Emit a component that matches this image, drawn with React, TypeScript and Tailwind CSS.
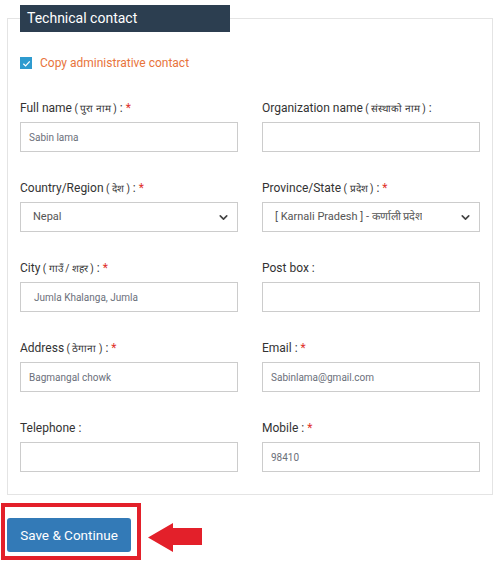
import { ChevronDown } from 'lucide-react'

type Field = {
  label: string
  local?: string
  required?: boolean
  value?: string
  select?: boolean
  valueClass?: string
}

const rows: [Field, Field][] = [
  [
    { label: 'Full name', local: 'पुरा नाम', required: true, value: 'Sabin lama' },
    { label: 'Organization name', local: 'संस्थाको नाम' },
  ],
  [
    { label: 'Country/Region', local: 'देश', required: true, value: 'Nepal', select: true },
    {
      label: 'Province/State',
      local: 'प्रदेश',
      required: true,
      value: '[ Karnali Pradesh ] - कर्णाली प्रदेश',
      select: true,
    },
  ],
  [
    { label: 'City', local: 'गाउँ / शहर', required: true, value: 'Jumla Khalanga, Jumla', valueClass: 'pl-[13px]' },
    { label: 'Post box' },
  ],
  [
    { label: 'Address', local: 'ठेगाना', required: true, value: 'Bagmangal chowk' },
    { label: 'Email', required: true, value: 'Sabinlama@gmail.com' },
  ],
  [
    { label: 'Telephone' },
    { label: 'Mobile', required: true, value: '98410' },
  ],
]

function FieldBox({ f }: { f: Field }) {
  return (
    <div className="flex w-[218px] flex-col">
      <label className="h-[16px] text-[12px] leading-[16px] text-[#333]">
        {f.label}
        {f.local && <span className="text-[10px]"> ( {f.local} )</span>} :
        {f.required && <span className="text-[#e0312b]"> *</span>}
      </label>
      {f.select ? (
        <div className="mt-[6px] flex h-[30px] items-center justify-between border border-[#ccc] bg-white pl-[12px] pr-[7px]">
          <span className="truncate text-[11px] text-[#555]">{f.value}</span>
          <ChevronDown size={13} strokeWidth={3} className="shrink-0 text-[#444]" />
        </div>
      ) : (
        <div className={`mt-[6px] flex h-[30px] items-center border border-[#ccc] bg-white ${f.valueClass ?? 'pl-[8px]'}`}>
          <span className="text-[10px] text-[#6b6f7a]">{f.value}</span>
        </div>
      )}
    </div>
  )
}

export default function App() {
  return (
    <div className="min-h-[561px] bg-white font-['Roboto','Liberation_Sans',sans-serif]">
      <fieldset className="ml-[7px] mt-[5px] w-[486px] border border-[#e4e4e4] pb-[22px] pl-[12px] pr-[11px]">
        <legend className="h-[27px] w-[210px] bg-[#2c3e50] pl-[7px] text-[14px] leading-[27px] text-white">
          Technical contact
        </legend>

        <div className="mt-[25px] flex h-[12px] items-center gap-[8px]">
          <span className="flex h-[12px] w-[12px] items-center justify-center bg-[#2f9bcf]">
            <svg width="9" height="9" viewBox="0 0 10 10" fill="none">
              <path d="M1.5 5.2 4 7.6 8.6 2.6" stroke="white" strokeWidth="1.4" />
            </svg>
          </span>
          <span className="text-[12px] text-[#e8743b]">Copy administrative contact</span>
        </div>

        <div className="mt-[31px] flex flex-col gap-[28px]">
          {rows.map((r, i) => (
            <div key={i} className="flex gap-[24px]">
              <FieldBox f={r[0]} />
              <FieldBox f={r[1]} />
            </div>
          ))}
        </div>
      </fieldset>

      <div className="ml-[1px] mt-[8px] flex items-start gap-[7px]">
        <div className="border-[4px] border-[#e3202a] pb-[4px] pl-[2px] pr-[6px] pt-[11px]">
          <button className="h-[34px] w-[124px] rounded-[3px] bg-[#337ab7] text-[13.5px] text-white">
            Save &amp; Continue
          </button>
        </div>
        <svg width="56" height="30" viewBox="0 0 56 30" className="mt-[20px]">
          <path d="M0 14.5 25 0V5H54V22H25V29Z" fill="#e3202a" strokeLinejoin="round" />
        </svg>
      </div>
    </div>
  )
}
